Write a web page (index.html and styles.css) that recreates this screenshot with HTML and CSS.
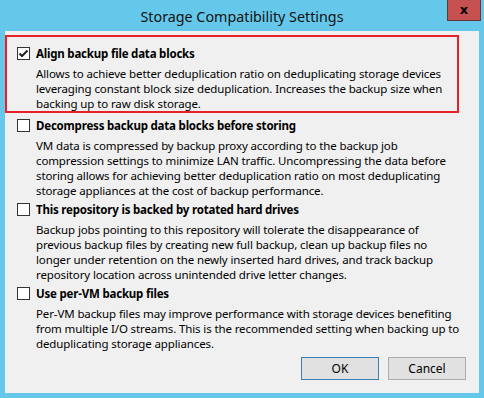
FILE: index.html
```html
<!DOCTYPE html>
<html lang="en">
<head>
  <meta charset="UTF-8" />
  <title>Storage Compatibility Settings</title>
  <link rel="stylesheet" href="styles.css">
</head>
<body>

  <div class="window">
    <div class="titlebar">
      <span class="title">Storage Compatibility Settings</span>
      <button class="close-btn">x</button>
    </div>

    <div class="client">
      <div class="option highlighted">
        <label class="option-head">
          <span class="checkbox checked">
            <svg width="11" height="11" viewBox="0 0 11 11"><path d="M1.5 5.5 L4 8 L9.5 2.5" fill="none" stroke="#222" stroke-width="2"/></svg>
          </span>
          Align backup file data blocks
        </label>
        <p class="desc">Allows to achieve better deduplication ratio on deduplicating storage devices<br>leveraging constant block size deduplication. Increases the backup size when<br>backing up to raw disk storage.</p>
      </div>

      <div class="option">
        <label class="option-head">
          <span class="checkbox"></span>
          Decompress backup data blocks before storing
        </label>
        <p class="desc">VM data is compressed by backup proxy according to the backup job<br>compression settings to minimize LAN traffic. Uncompressing the data before<br>storing allows for achieving better deduplication ratio on most deduplicating<br>storage appliances at the cost of backup performance.</p>
      </div>

      <div class="option">
        <label class="option-head">
          <span class="checkbox"></span>
          This repository is backed by rotated hard drives
        </label>
        <p class="desc">Backup jobs pointing to this repository will tolerate the disappearance of<br>previous backup files by creating new full backup, clean up backup files no<br>longer under retention on the newly inserted hard drives, and track backup<br>repository location across unintended drive letter changes.</p>
      </div>

      <div class="option">
        <label class="option-head">
          <span class="checkbox"></span>
          Use per-VM backup files
        </label>
        <p class="desc">Per-VM backup files may improve performance with storage devices benefiting<br>from multiple I/O streams. This is the recommended setting when backing up to<br>deduplicating storage appliances.</p>
      </div>

      <div class="buttons">
        <button class="btn default">OK</button>
        <button class="btn">Cancel</button>
      </div>
    </div>
  </div>

</body>
</html>
```

FILE: styles.css
```css
* {
  box-sizing: border-box;
  margin: 0;
  padding: 0;
}

body {
  font-family: 'Noto Sans', 'Open Sans', sans-serif;
  background: #65c8ea;
  color: #000;
  width: 484px;
  height: 398px;
  overflow: hidden;
}

.window {
  display: flex;
  flex-direction: column;
  height: 398px;
}

.titlebar {
  height: 31px;
  display: flex;
  justify-content: center;
  align-items: center;
  position: relative;
}

.title {
  font-size: 14.3px;
  color: #111;
  padding-top: 2px;
}

.close-btn {
  position: absolute;
  top: 0;
  right: 3px;
  width: 34px;
  height: 21px;
  background: #c75050;
  border: 1px solid #5a3a3a;
  border-top: none;
  font-family: 'DejaVu Sans', sans-serif;
  font-weight: bold;
  font-size: 13px;
  line-height: 16px;
  color: #000;
}

.client {
  background: #f0f0f0;
  margin: 0 5px 5px 5px;
  height: 362px;
  display: flex;
  flex-direction: column;
  font-size: 11.5px;
  letter-spacing: -0.2px;
  padding-top: 4px;
}

.option {
  padding: 0 0 0 12px;
  margin-bottom: 4px;
}

.option.highlighted {
  width: 454px;
  border: 2px solid #e8202a;
  padding: 9px 0 0 10px;
  margin-bottom: 5px;
}

.option-head {
  display: flex;
  align-items: center;
  gap: 6px;
  font-weight: bold;
  height: 15px;
  margin-bottom: 5px;
}

.checkbox {
  width: 13px;
  height: 13px;
  border: 1px solid #333;
  background: #fff;
  display: flex;
  align-items: center;
  justify-content: center;
}

.desc {
  padding-left: 19px;
  line-height: 15px;
  letter-spacing: -0.12px;
  white-space: nowrap;
}

.buttons {
  margin-top: auto;
  display: flex;
  justify-content: flex-end;
  gap: 9px;
  padding: 0 13px 13px 0;
}

.btn {
  width: 78px;
  height: 23px;
  background: #e1e1e1;
  border: 1px solid #adadad;
  font-family: inherit;
  font-size: 12px;
  color: #000;
}

.btn.default {
  border-color: #3c7fb1;
}
```
